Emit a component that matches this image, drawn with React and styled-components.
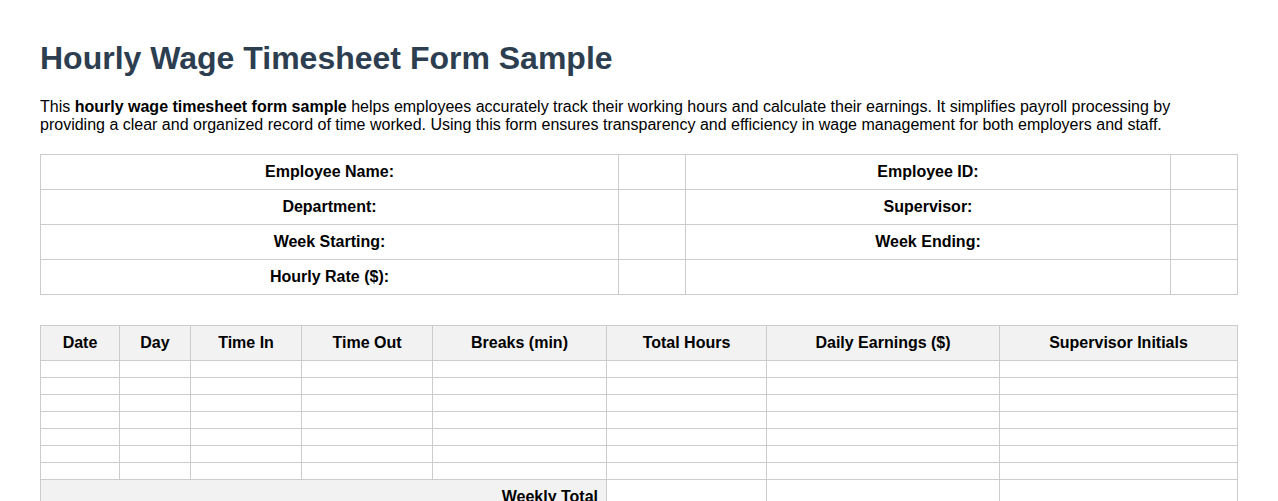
import React from 'react';
import styled, { createGlobalStyle } from 'styled-components';

const GlobalStyle = createGlobalStyle`
  body {
    margin: 0;
    font-family: "Liberation Sans", Arial, sans-serif;
    background: #ffffff;
    color: #000000;
  }
`;

const Page = styled.div`
  padding: 20px 40px;
`;

const Title = styled.h1`
  font-size: 32px;
  font-weight: bold;
  color: #2c3e50;
  margin: 20px 0 21px 0;
`;

const Intro = styled.p`
  font-size: 16px;
  margin: 0 0 20px 0;
`;

const Table = styled.table`
  width: 100%;
  border-collapse: collapse;
  table-layout: fixed;
  margin-bottom: ${(props) => props.$gap || 0}px;
`;

const Cell = styled.td`
  border: 1px solid #cccccc;
  padding: 8px;
  font-size: 16px;
  height: 18px;
  text-align: ${(props) => props.$align || 'center'};
  font-weight: ${(props) => (props.$bold ? 'bold' : 'normal')};
  background: ${(props) => (props.$shade ? '#f2f2f2' : '#ffffff')};
`;

const BlankCell = styled.td`
  border: 1px solid #cccccc;
  padding: 0;
  height: 16px;
`;

const HeadCell = styled.th`
  border: 1px solid #cccccc;
  padding: 8px;
  font-size: 16px;
  font-weight: bold;
  background: #f2f2f2;
  text-align: center;
`;

const infoRows = [
  ['Employee Name:', 'Employee ID:'],
  ['Department:', 'Supervisor:'],
  ['Week Starting:', 'Week Ending:'],
  ['Hourly Rate ($):', ''],
];

const columns = [
  { label: 'Date', width: 79 },
  { label: 'Day', width: 71 },
  { label: 'Time In', width: 111 },
  { label: 'Time Out', width: 131 },
  { label: 'Breaks (min)', width: 174 },
  { label: 'Total Hours', width: 160 },
  { label: 'Daily Earnings ($)', width: 233 },
  { label: 'Supervisor Initials', width: 238 },
];

const App = () => {
  return (
    <Page>
      <GlobalStyle />
      <Title>Hourly Wage Timesheet Form Sample</Title>
      <Intro>
        This <strong>hourly wage timesheet form sample</strong> helps employees accurately track their working hours and calculate their earnings. It simplifies payroll processing by providing a clear and organized record of time worked. Using this form ensures transparency and efficiency in wage management for both employers and staff.
      </Intro>

      <Table $gap={30}>
        <colgroup>
          <col style={{ width: '578px' }} />
          <col style={{ width: '67px' }} />
          <col style={{ width: '485px' }} />
          <col style={{ width: '67px' }} />
        </colgroup>
        <tbody>
          {infoRows.map(([left, right]) => (
            <tr key={left}>
              <Cell $bold>{left}</Cell>
              <Cell />
              <Cell $bold>{right}</Cell>
              <Cell />
            </tr>
          ))}
        </tbody>
      </Table>

      <Table>
        <colgroup>
          {columns.map((c) => (
            <col key={c.label} style={{ width: `${c.width}px` }} />
          ))}
        </colgroup>
        <thead>
          <tr>
            {columns.map((c) => (
              <HeadCell key={c.label}>{c.label}</HeadCell>
            ))}
          </tr>
        </thead>
        <tbody>
          {Array.from({ length: 7 }).map((_, i) => (
            <tr key={i}>
              {columns.map((c) => (
                <BlankCell key={c.label} />
              ))}
            </tr>
          ))}
          <tr>
            <Cell colSpan={5} $bold $shade $align="right">Weekly Total</Cell>
            <Cell />
            <Cell />
            <Cell />
          </tr>
        </tbody>
      </Table>
    </Page>
  );
};

export default App;
